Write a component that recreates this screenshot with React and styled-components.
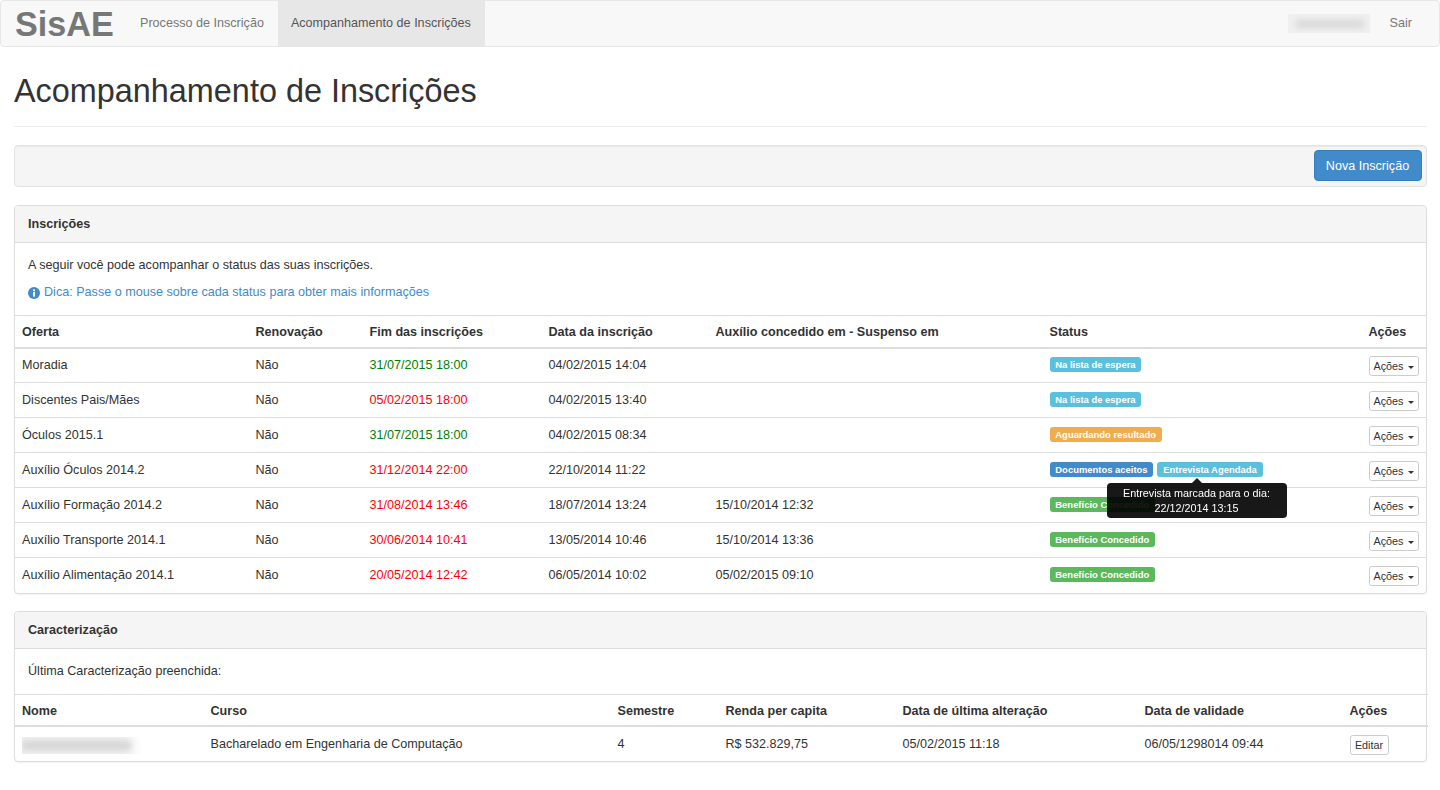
import React from 'react';
import styled, { createGlobalStyle } from 'styled-components';

const Global = createGlobalStyle`
  * { box-sizing: border-box; }
  body {
    margin: 0;
    background: #fff;
    color: #333;
    font-family: "Liberation Sans", Arial, sans-serif;
    font-size: 12.6px;
    line-height: 1.42857;
  }
`;

const inscricoes = [
  { oferta: 'Moradia', fim: '31/07/2015 18:00', open: true, data: '04/02/2015 14:04', aux: '', status: [['info', 'Na lista de espera']] },
  { oferta: 'Discentes Pais/Mães', fim: '05/02/2015 18:00', data: '04/02/2015 13:40', aux: '', status: [['info', 'Na lista de espera']] },
  { oferta: 'Óculos 2015.1', fim: '31/07/2015 18:00', open: true, data: '04/02/2015 08:34', aux: '', status: [['warning', 'Aguardando resultado']] },
  { oferta: 'Auxílio Óculos 2014.2', fim: '31/12/2014 22:00', data: '22/10/2014 11:22', aux: '', status: [['primary', 'Documentos aceitos'], ['info', 'Entrevista Agendada']], tip: true },
  { oferta: 'Auxílio Formação 2014.2', fim: '31/08/2014 13:46', data: '18/07/2014 13:24', aux: '15/10/2014 12:32', status: [['success', 'Benefício Concedido']] },
  { oferta: 'Auxílio Transporte 2014.1', fim: '30/06/2014 10:41', data: '13/05/2014 10:46', aux: '15/10/2014 13:36', status: [['success', 'Benefício Concedido']] },
  { oferta: 'Auxílio Alimentação 2014.1', fim: '20/05/2014 12:42', data: '06/05/2014 10:02', aux: '05/02/2015 09:10', status: [['success', 'Benefício Concedido']] },
];

const labelColors = { info: '#5bc0de', warning: '#f0ad4e', primary: '#428bca', success: '#5cb85c' };

const App = () => (
  <>
    <Global />
    <Navbar>
      <Brand>SisAE</Brand>
      <NavLink>Processo de Inscrição</NavLink>
      <NavLink $active>Acompanhamento de Inscrições</NavLink>
      <NavRight>
        <BlurName />
        <NavLink>Sair</NavLink>
      </NavRight>
    </Navbar>
    <Container>
      <PageHeader>Acompanhamento de Inscrições</PageHeader>
      <Well>
        <PrimaryButton>Nova Inscrição</PrimaryButton>
      </Well>

      <Panel>
        <PanelHeading>Inscrições</PanelHeading>
        <PanelBody>
          <Intro>A seguir você pode acompanhar o status das suas inscrições.</Intro>
          <Tip>
            <svg width="12" height="12" viewBox="0 0 12 12">
              <circle cx="6" cy="6" r="6" fill="#428bca" />
              <rect x="5" y="5" width="2" height="4.6" fill="#fff" />
              <rect x="5" y="2.4" width="2" height="1.8" fill="#fff" />
            </svg>
            Dica: Passe o mouse sobre cada status para obter mais informações
          </Tip>
        </PanelBody>
        <Table>
          <thead>
            <tr>
              <Th $w={233.5}>Oferta</Th>
              <Th $w={114}>Renovação</Th>
              <Th $w={179}>Fim das inscrições</Th>
              <Th $w={167}>Data da inscrição</Th>
              <Th $w={334}>Auxílio concedido em - Suspenso em</Th>
              <Th $w={319}>Status</Th>
              <Th $w={65.5}>Ações</Th>
            </tr>
          </thead>
          <tbody>
            {inscricoes.map((item) => (
              <tr key={item.oferta}>
                <Td>{item.oferta}</Td>
                <Td>Não</Td>
                <Td>
                  <Deadline $open={item.open}>{item.fim}</Deadline>
                </Td>
                <Td>{item.data}</Td>
                <Td>{item.aux}</Td>
                <Td>
                  <StatusWrap>
                    {item.status.map(([kind, text]) => (
                      <Label key={text} $kind={kind}>{text}</Label>
                    ))}
                    {item.tip && (
                      <Tooltip>
                        <TooltipArrow />
                        Entrevista marcada para o dia:
                        <br />
                        22/12/2014 13:15
                      </Tooltip>
                    )}
                  </StatusWrap>
                </Td>
                <Td>
                  <SmallButton>
                    Ações <Caret />
                  </SmallButton>
                </Td>
              </tr>
            ))}
          </tbody>
        </Table>
      </Panel>

      <Panel>
        <PanelHeading>Caracterização</PanelHeading>
        <PanelBody>
          <Intro $flush>Última Caracterização preenchida:</Intro>
        </PanelBody>
        <Table>
          <thead>
            <tr>
              <Th $w={188.5}>Nome</Th>
              <Th $w={407}>Curso</Th>
              <Th $w={108}>Semestre</Th>
              <Th $w={177}>Renda per capita</Th>
              <Th $w={242}>Data de última alteração</Th>
              <Th $w={205}>Data de validade</Th>
              <Th $w={85.5}>Ações</Th>
            </tr>
          </thead>
          <tbody>
            <tr>
              <Td><BlurCell /></Td>
              <Td>Bacharelado em Engenharia de Computação</Td>
              <Td>4</Td>
              <Td>R$ 532.829,75</Td>
              <Td>05/02/2015 11:18</Td>
              <Td>06/05/1298014 09:44</Td>
              <Td><SmallButton $edit>Editar</SmallButton></Td>
            </tr>
          </tbody>
        </Table>
      </Panel>
    </Container>
  </>
);

export default App;

const Navbar = styled.nav`
  display: flex;
  align-items: stretch;
  height: 47px;
  padding-left: 14px;
  background: #f8f8f8;
  border: 1px solid #e7e7e7;
  border-radius: 4px;
`;

const Brand = styled.div`
  width: 112px;
  color: #777;
  font-size: 34.2px;
  font-weight: 700;
  line-height: 47px;
`;

const NavLink = styled.a`
  display: flex;
  align-items: center;
  padding: 1px 14px 0 13px;
  color: ${(p) => (p.$active ? '#555' : '#777')};
  background: ${(p) => (p.$active ? '#e7e7e7' : 'transparent')};
`;

const NavRight = styled.div`
  display: flex;
  align-items: center;
  margin-left: auto;
  padding-right: 13px;
`;

const BlurName = styled.div`
  position: relative;
  overflow: hidden;
  width: 82px;
  height: 19px;
  margin-right: 7px;
  background: #f0f0f0;

  &::before {
    content: '';
    position: absolute;
    top: 6px;
    left: 8px;
    right: 6px;
    height: 8px;
    background: #d8d8d8;
    filter: blur(3px);
  }
`;

const Container = styled.main`
  padding: 0 13px 0 14px;
`;

const PageHeader = styled.h1`
  margin: 19px 0 18px;
  padding-bottom: 10px;
  border-bottom: 1px solid #eee;
  color: #333;
  font-size: 32.4px;
  font-weight: 500;
  line-height: 50px;
`;

const Well = styled.div`
  display: flex;
  justify-content: flex-end;
  height: 42px;
  margin-bottom: 18px;
  padding: 4px 4px;
  background: #f5f5f5;
  border: 1px solid #e3e3e3;
  border-radius: 4px;
  box-shadow: inset 0 1px 1px rgba(0, 0, 0, 0.05);
`;

const PrimaryButton = styled.button`
  width: 108px;
  height: 31px;
  padding: 2px 1px 0 0;
  color: #fff;
  background: #428bca;
  border: 1px solid #357ebd;
  border-radius: 4px;
  font: inherit;
`;

const Panel = styled.section`
  margin-bottom: 17px;
  background: #fff;
  border: 1px solid #ddd;
  border-radius: 4px;
  box-shadow: 0 1px 1px rgba(0, 0, 0, 0.05);
`;

const PanelHeading = styled.h3`
  margin: 0;
  height: 37px;
  padding: 0 13px;
  background: #f5f5f5;
  border-bottom: 1px solid #ddd;
  border-radius: 3px 3px 0 0;
  color: #333;
  font-size: 12.6px;
  font-weight: 700;
  line-height: 36px;
`;

const PanelBody = styled.div`
  padding: 13px 13px 13px;
`;

const Intro = styled.p`
  margin: 0 0 ${(p) => (p.$flush ? '0' : '8px')};
  line-height: 19px;
`;

const Tip = styled.p`
  display: flex;
  align-items: center;
  gap: 4px;
  margin: 0;
  color: #428bca;
  line-height: 19px;
`;

const Table = styled.table`
  width: 100%;
  table-layout: fixed;
  border-collapse: collapse;
`;

const Th = styled.th`
  width: ${(p) => p.$w}px;
  height: 32px;
  padding: 4px 7px 0;
  border-top: 1px solid #ddd;
  border-bottom: 2px solid #ddd;
  text-align: left;
  font-weight: 700;
`;

const Td = styled.td`
  height: 35px;
  padding: 2px 7px 0;
  border-top: 1px solid #ddd;
  white-space: nowrap;
`;

const StatusWrap = styled.div`
  position: relative;
  display: flex;
  gap: 4px;
  margin-bottom: 4px;
`;

const Deadline = styled.span`
  color: ${(p) => (p.$open ? 'green' : 'red')};
`;

const Label = styled.span`
  padding: 2px 5.8px;
  color: #fff;
  background: ${(p) => labelColors[p.$kind]};
  border-radius: 3px;
  font-size: 9.45px;
  font-weight: 700;
  line-height: 11px;
  white-space: nowrap;
`;

const Tooltip = styled.div`
  position: absolute;
  z-index: 10;
  top: 21px;
  left: 57px;
  width: 180px;
  padding: 3px 8px 2px;
  color: #fff;
  background: #000;
  opacity: 0.9;
  border-radius: 4px;
  font-size: 10.8px;
  line-height: 15px;
  text-align: center;
`;

const TooltipArrow = styled.span`
  position: absolute;
  top: -5px;
  left: 50%;
  margin-left: -5px;
  border-right: 5px solid transparent;
  border-bottom: 5px solid #000;
  border-left: 5px solid transparent;
`;

const SmallButton = styled.button`
  display: block;
  height: 20px;
  padding: 0;
  color: #333;
  background: #fff;
  border: 1px solid #ccc;
  border-radius: 2.7px;
  font: inherit;
  font-size: 10.8px;
  line-height: 18px;
  width: ${(p) => (p.$edit ? '39px' : '50px')};
`;

const Caret = styled.span`
  display: inline-block;
  margin-left: 1px;
  vertical-align: middle;
  border-top: 3px solid #333;
  border-right: 3px solid transparent;
  border-left: 3px solid transparent;
`;

const BlurCell = styled.div`
  position: relative;
  overflow: hidden;
  width: 119px;
  height: 17px;
  background: linear-gradient(90deg, #f0f0f0 0%, #f0f0f0 85%, #fff 100%);

  &::before {
    content: '';
    position: absolute;
    top: 4px;
    left: 0;
    right: 10px;
    height: 9px;
    background: #d4d4d4;
    filter: blur(3px);
  }
`;
